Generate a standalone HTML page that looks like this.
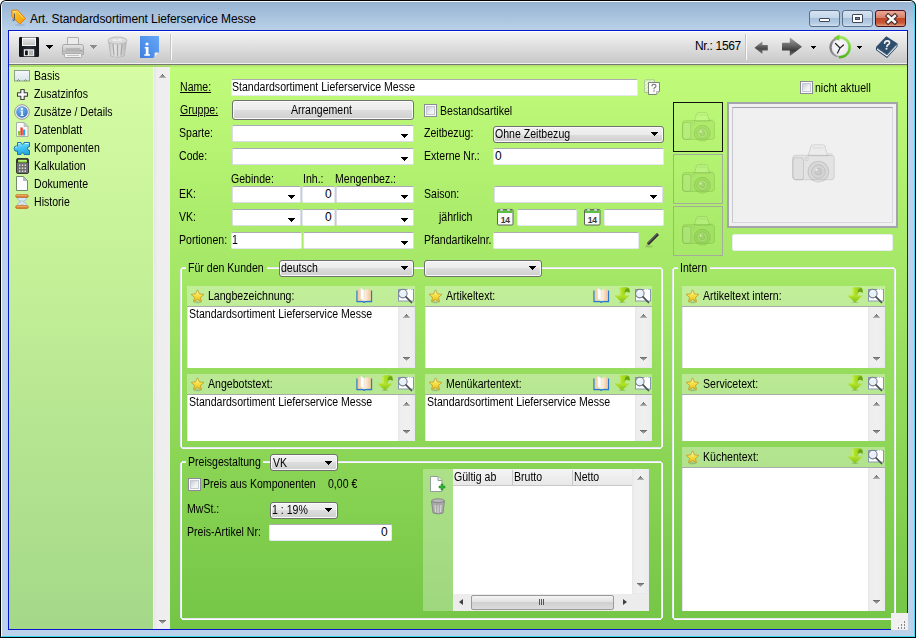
<!DOCTYPE html>
<html><head><meta charset="utf-8">
<style>
*{box-sizing:border-box;margin:0;padding:0}
html,body{width:916px;height:638px;overflow:hidden;background:#fff}
body{position:relative;font-family:"Liberation Sans",sans-serif;font-size:11px;color:#000}
.a{position:absolute}
#win{position:absolute;left:0;top:0;width:916px;height:638px;background:#000;border-radius:6px 6px 0 0}
#frame{position:absolute;left:1px;top:1px;width:914px;height:636px;border-radius:5px 5px 0 0;border-left:1px solid #f8f8f8;background:linear-gradient(#f8f8f8 0,#f8f8f8 1px,#97b3d3 1px,#b8d0e8 28px,#bcd2ea 40px,#bcd2ea 100%);border-right:1px solid #4ad8f0;border-bottom:1px solid #30d8f0}
#client{position:absolute;left:8px;top:30px;width:900px;height:600px;border:1px solid #0818d0;background:#c1fb7a;overflow:hidden}
#toolbar{position:absolute;left:0;top:0;width:898px;height:34px;background:linear-gradient(#fff 0,#fff 1px,#f3f3f3 1px,#c8c8c8 32px,#f0f0f0 32px,#f0f0f0 33px,#767676 33px)}
#nav{position:absolute;left:0;top:34px;width:161px;height:564px;background:linear-gradient(#aade66 0,#aade66 2px,#d6fca4 2px,#c8f39a 160px,#a4d888 100%)}
#navsb{position:absolute;left:144px;top:36px;width:17px;height:562px;background:linear-gradient(90deg,#f4f0f8 0,#f4f0f8 1px,#e6e6e6 1px,#eeeeee 4px,#efefef 100%)}
#main{position:absolute;left:161px;top:34px;width:737px;height:564px;background:linear-gradient(#aede66 0,#c1fb7a 3px,#9be060 276px,#74c546 100%)}
.t{position:absolute;white-space:nowrap;font-size:12px;line-height:13px;transform:scaleX(0.88);transform-origin:0 0;margin-left:-1px}
.tb{position:absolute;background:#fff;border:1px solid #e3e9ef;border-top-color:#abadb3;border-radius:2px}
.cb{position:absolute;background:#fff;border:1px solid #dcdce8;border-top-color:#a8a8b8;border-radius:2px}
.tri{position:absolute;width:7px;height:4px;--c:#000;background:linear-gradient(var(--c),var(--c)) 0 0/7px 1px no-repeat,linear-gradient(var(--c),var(--c)) 1px 1px/5px 1px no-repeat,linear-gradient(var(--c),var(--c)) 2px 2px/3px 1px no-repeat,linear-gradient(var(--c),var(--c)) 3px 3px/1px 1px no-repeat}
.tri5{position:absolute;width:5px;height:3px;--c:#000;background:linear-gradient(var(--c),var(--c)) 0 0/5px 1px no-repeat,linear-gradient(var(--c),var(--c)) 1px 1px/3px 1px no-repeat,linear-gradient(var(--c),var(--c)) 2px 2px/1px 1px no-repeat}
.tup{width:7px;height:4px;background:linear-gradient(#6a6a6a,#6a6a6a) 3px 0/1px 1px no-repeat,linear-gradient(#808080,#808080) 2px 1px/3px 1px no-repeat,linear-gradient(#989898,#989898) 1px 2px/5px 1px no-repeat,linear-gradient(#b0b0b0,#b0b0b0) 0 3px/7px 1px no-repeat}
.tdn{width:7px;height:4px;background:linear-gradient(#707070,#707070) 0 0/7px 1px no-repeat,linear-gradient(#888,#888) 1px 1px/5px 1px no-repeat,linear-gradient(#a0a0a0,#a0a0a0) 2px 2px/3px 1px no-repeat,linear-gradient(#b8b8b8,#b8b8b8) 3px 3px/1px 1px no-repeat}
.gc{position:absolute;border:1px solid #707070;border-radius:3px;background:linear-gradient(#f2f2f2,#ebebeb 50%,#dddddd 50%,#cfcfcf);box-shadow:inset 0 0 0 1px #fafafa}
.grp{position:absolute;border:1px solid #fff;border-radius:3px}
.ph{position:absolute;background:rgba(255,255,255,0.34);border-bottom:1px solid #a8aca8}
.ta{position:absolute;background:#fff;border-left:1px solid #e4e4f0}
.vsb{position:absolute;background:linear-gradient(90deg,#e6e6e6 0,#eeeeee 2px,#f0f0f0 60%,#ececec 100%);border-right:1px solid #e8e8f0;border-bottom:1px solid #e8e8f0}
.chk{position:absolute;width:13px;height:13px;border:1px solid #8c8a98;background:#fafafa}.chk::after{content:'';position:absolute;left:1px;top:1px;width:9px;height:9px;box-sizing:border-box;border:1px solid #c4c8d0;background:linear-gradient(135deg,#c8ccd4,#eef0f2 60%,#f8f8f8)}
.capbtn{border:1px solid #5b6f88;border-radius:3px;background:linear-gradient(#d6e4f2 0,#c4d6ea 45%,#a8c0da 50%,#b4cce4 80%,#cfe0f0 100%)}
</style></head><body>
<div id="win"></div>
<div id="frame"></div>

<div id="client">
  <div id="toolbar"></div>
  <div id="nav"></div>
  <div id="navsb"></div>
  <div id="main"></div>
</div>

<!-- TITLE BAR -->
<svg class="a" style="left:9px;top:9px" width="18" height="18" viewBox="0 0 18 18">
  <defs><linearGradient id="gtag" x1="0" y1="0" x2="1" y2="1"><stop offset="0" stop-color="#ffc830"/><stop offset="1" stop-color="#f0a000"/></linearGradient></defs>
  <ellipse cx="11" cy="16" rx="5" ry="1.2" fill="rgba(60,90,140,0.15)"/>
  <path d="M2.8 1.6 Q2.6 1.2 3.2 1.2 L8.7 1.2 L16.4 9.6 L10.9 15 L2.8 7.6 Z" fill="url(#gtag)" stroke="#e87c0c" stroke-width="1" stroke-linejoin="round"/>
  <path d="M3.8 2.4 L8.4 2.4 L14.8 9.4" fill="none" stroke="#ffe490" stroke-width="0.9"/>
  <circle cx="5.5" cy="4.4" r="1" fill="#fff8e0"/>
  <path d="M5.4 4.2 L5.4 10.6 Q5.2 12 4.3 11.6 Q3.8 11.3 4 10.4" fill="none" stroke="#404850" stroke-width="0.9"/>
</svg>
<div class="t" style="left:30px;top:12px;font-size:12px;line-height:15px;letter-spacing:-0.1px;transform:none;margin-left:0">Art. Standardsortiment Lieferservice Messe</div>
<div class="a capbtn" style="left:809px;top:10px;width:31px;height:17px"><div class="a" style="left:9px;top:7px;width:11px;height:4px;background:#fff;border:1px solid #404858;border-radius:1px"></div></div>
<div class="a capbtn" style="left:842px;top:10px;width:31px;height:17px"><div class="a" style="left:9px;top:3px;width:11px;height:9px;background:#fff;border:1px solid #404858;border-radius:1px"><div class="a" style="left:2px;top:2px;width:5px;height:3px;background:#6c86a8;border:1px solid #404858"></div></div></div>
<div class="a" style="left:875px;top:10px;width:31px;height:17px;border:1px solid #50101a;border-radius:3px;background:linear-gradient(#eaa898 0,#d88068 45%,#c04828 50%,#c85838 80%,#e0a080 100%)">
  <svg class="a" style="left:9px;top:2px" width="13" height="12" viewBox="0 0 13 12"><path d="M3.2 3 L9.8 9 M9.8 3 L3.2 9" stroke="#402828" stroke-width="4.6" stroke-linecap="square"/><path d="M3.2 3 L9.8 9 M9.8 3 L3.2 9" stroke="#f6f6f6" stroke-width="2.6" stroke-linecap="square"/></svg>
</div>

<!-- TOOLBAR -->
<svg class="a" style="left:18px;top:36px" width="22" height="22" viewBox="0 0 22 22">
  <defs><linearGradient id="gfl" x1="0" y1="0" x2="1" y2="0"><stop offset="0" stop-color="#101218"/><stop offset="0.5" stop-color="#2a2e38"/><stop offset="1" stop-color="#14161c"/></linearGradient>
  <linearGradient id="glb" x1="0" y1="0" x2="0" y2="1"><stop offset="0" stop-color="#e4e4e4"/><stop offset="1" stop-color="#c4c4c4"/></linearGradient></defs>
  <rect x="1" y="1" width="20" height="20" rx="1.2" fill="url(#gfl)"/>
  <rect x="4" y="1.5" width="14" height="8.5" fill="#f8f8f8"/>
  <rect x="5" y="3" width="12" height="6" fill="url(#glb)"/>
  <rect x="5.8" y="13.2" width="10.4" height="7" fill="#e8e8e8"/>
  <rect x="7" y="14.5" width="2.8" height="4.8" rx="0.8" fill="#141414"/>
  <rect x="11" y="14.5" width="4" height="4.8" fill="#b4b4b4"/>
</svg>
<div class="tri" style="left:46px;top:45px"></div>
<svg class="a" style="left:61px;top:36px" width="24" height="23" viewBox="0 0 24 23">
  <defs><linearGradient id="gpr" x1="0" y1="0" x2="0" y2="1"><stop offset="0" stop-color="#e8e8e8"/><stop offset="0.35" stop-color="#d4d4d4"/><stop offset="0.7" stop-color="#b8b8b8"/><stop offset="1" stop-color="#d0d0d0"/></linearGradient></defs>
  <rect x="6.5" y="1.5" width="11" height="9" rx="0.5" fill="#ececec" stroke="#b0b0b0"/>
  <path d="M1.5 10.5 Q1.5 8.5 4 8.5 L20 8.5 Q22.5 8.5 22.5 10.5 L22.5 18.5 L1.5 18.5 Z" fill="url(#gpr)" stroke="#a8a8a8"/>
  <rect x="5" y="12" width="14" height="3" fill="#a8a8a8" opacity="0.6"/>
  <rect x="3.5" y="17.5" width="17" height="4" rx="1" fill="#f2f2f2" stroke="#ababab"/>
  <rect x="6" y="19" width="12" height="1" fill="#c0c0c0"/>
  <rect x="19.5" y="14" width="1" height="1" fill="#888"/>
</svg>
<div class="tri" style="left:90px;top:45px;--c:#8c8c8c"></div>
<svg class="a" style="left:106px;top:35px" width="23" height="24" viewBox="0 0 23 24">
  <defs><linearGradient id="gtr" x1="0" y1="0" x2="1" y2="0"><stop offset="0" stop-color="#bcbcbc"/><stop offset="0.3" stop-color="#e6e6e6"/><stop offset="0.7" stop-color="#d8d8d8"/><stop offset="1" stop-color="#b0b0b0"/></linearGradient></defs>
  <path d="M2.5 6 L4.8 21 Q11.5 24 18.2 21 L20.5 6 Z" fill="url(#gtr)" stroke="#b4b4b4" stroke-width="0.8"/>
  <path d="M7 9 L8 20.5 M11.5 9.5 L11.5 21.5 M16 9 L15 20.5" stroke="#a8a8a8" stroke-width="1.3"/>
  <ellipse cx="11.5" cy="5.5" rx="9.5" ry="3.5" fill="#dcdcdc" stroke="#b8b8b8" stroke-width="0.9"/>
  <path d="M5 5 Q8 2.5 11 4.5 Q14 2 18 5 Q14 7.5 11 6 Q8 8 5 5 Z" fill="#f0f0f0" stroke="#c8c8c8" stroke-width="0.5"/>
</svg>
<svg class="a" style="left:140px;top:36px" width="20" height="22" viewBox="0 0 20 22">
  <defs><linearGradient id="ginf" x1="0" y1="1" x2="1" y2="0"><stop offset="0" stop-color="#3c7ee0"/><stop offset="1" stop-color="#68a8f8"/></linearGradient></defs>
  <path d="M0 0 H19 V16.5 L13.5 22 H0 Z" fill="url(#ginf)"/>
  <path d="M19 16.5 Q15 16 14.5 17 Q15 20 13.5 22 Z" fill="#f0f4fa"/>
  <path d="M19 16.5 Q15 16 14.5 17 Q15 20 13.5 22" fill="none" stroke="#90a8c8" stroke-width="0.5"/>
  <circle cx="7" cy="8" r="1.6" fill="#fff"/>
  <path d="M4.8 11 H8.5 V18.2 H10 V19.8 H4.3 V18.2 H5.8 V12.4 H4.8 Z" fill="#fff"/>
</svg>
<div class="a" style="left:170px;top:34px;width:1px;height:26px;background:#c4c4c4;box-shadow:1px 0 0 #fafafa"></div>
<div class="t" style="left:695px;top:39px;font-size:12px;line-height:14px;letter-spacing:-0.3px;transform:none;margin-left:0">Nr.: 1567</div>
<div class="a" style="left:745px;top:34px;width:1px;height:26px;background:#c4c4c4;box-shadow:1px 0 0 #fafafa"></div>
<svg class="a" style="left:753px;top:41px" width="16" height="14" viewBox="0 0 16 14">
  <defs><linearGradient id="ga" x1="0" y1="0" x2="0" y2="1"><stop offset="0" stop-color="#9a9a9a"/><stop offset="0.55" stop-color="#4a4a4a"/><stop offset="1" stop-color="#6a6a6a"/></linearGradient></defs>
  <path d="M1.5 6.8 L8.8 0.8 Q9.4 0.6 9.4 1.4 L9.4 4 L14.4 4 Q14.8 4 14.8 4.5 L14.8 9.2 Q14.8 9.6 14.4 9.6 L9.4 9.6 L9.4 12.2 Q9.4 13 8.8 12.6 Z" fill="url(#ga)"/>
</svg>
<svg class="a" style="left:781px;top:37px" width="22" height="20" viewBox="0 0 22 20">
  <defs><linearGradient id="gb" x1="0" y1="0" x2="0" y2="1"><stop offset="0" stop-color="#a0a0a0"/><stop offset="0.5" stop-color="#5a5a5a"/><stop offset="0.7" stop-color="#3c3c3c"/><stop offset="1" stop-color="#707070"/></linearGradient></defs>
  <path d="M21 9.8 L9.6 1 Q8.8 0.5 8.8 1.5 L8.8 5.8 L1.6 5.8 Q1 5.8 1 6.5 L1 13 Q1 13.6 1.6 13.6 L8.8 13.6 L8.8 18.2 Q8.8 19.2 9.6 18.6 Z" fill="url(#gb)"/>
</svg>
<div class="tri5" style="left:811px;top:46px"></div>
<svg class="a" style="left:828px;top:34px" width="25" height="26" viewBox="0 0 25 26">
  <defs><linearGradient id="gcb" x1="0" y1="0" x2="1" y2="0"><stop offset="0" stop-color="#7a7a7a"/><stop offset="0.5" stop-color="#b8b8b8"/><stop offset="1" stop-color="#e0e0e0"/></linearGradient>
  <radialGradient id="gcf" cx="0.45" cy="0.4" r="0.7"><stop offset="0" stop-color="#ffffff"/><stop offset="1" stop-color="#e4e0ea"/></radialGradient>
  <linearGradient id="gcg" x1="0" y1="0" x2="0" y2="1"><stop offset="0" stop-color="#a0e860"/><stop offset="1" stop-color="#50b818"/></linearGradient></defs>
  <circle cx="12" cy="13.2" r="10.6" fill="url(#gcb)"/>
  <circle cx="12.3" cy="13.4" r="8.6" fill="url(#gcf)"/>
  <path d="M12 14 L7.5 9.5 M12 14 L15.5 11 M12 14 L9.5 19" stroke="#2c2c2c" stroke-width="1.3" stroke-linecap="round"/>
  <path d="M10 3.2 Q15.5 2.5 19.5 7 Q22.8 11.5 21 17 Q18.5 22.8 11 23.4" fill="none" stroke="url(#gcg)" stroke-width="2.6"/>
  <path d="M5.8 3.8 L11.5 0.6 L11.2 6.8 Z" fill="#78d030"/>
</svg>
<div class="tri5" style="left:857px;top:46px"></div>
<svg class="a" style="left:875px;top:35px" width="24" height="24" viewBox="0 0 24 24">
  <path d="M1 12 L11.2 1.2 L22.5 8.5 L12 19.5 Z" fill="#2e4c6c"/>
  <path d="M1 12 L12 19.5 L22.5 8.5 L22.5 11.5 L12 23 L1 15 Z" fill="#1e3a58"/>
  <path d="M2 13.2 L12 20.2 L21.6 10 L21.6 11.6 L12 21.8 L2 14.8 Z" fill="#f6f8fa"/>
  <path d="M9.6 8.2 Q10 5.6 12.6 5.8 Q14.9 6.1 14.4 8.2 Q14 9.3 12.7 9.9 Q11.9 10.4 12 11.4" fill="none" stroke="#f4f4f4" stroke-width="1.7" stroke-linecap="round"/>
  <circle cx="11.5" cy="13.8" r="1" fill="#f4f4f4"/>
</svg>

<!-- NAV -->

<svg class="a" style="left:14px;top:70px" width="17" height="13" viewBox="0 0 17 13">
  <defs><linearGradient id="gn1" x1="0" y1="0" x2="0" y2="1"><stop offset="0" stop-color="#f4f8fc"/><stop offset="1" stop-color="#d8e4ec"/></linearGradient></defs>
  <rect x="0.5" y="0.5" width="15" height="10.5" fill="url(#gn1)" stroke="#8ca088"/>
  <path d="M3 11 L4.5 9.5 L6 11 M10 11 L11.5 9.5 L13 11" stroke="#6a9a60" stroke-width="1" fill="none"/>
</svg>
<div class="t" style="left:35px;top:70px">Basis</div>
<svg class="a" style="left:16px;top:88px" width="13" height="13" viewBox="0 0 13 13">
  <path d="M4.8 1.5 H8.2 V4.8 H11.5 V8.2 H8.2 V11.5 H4.8 V8.2 H1.5 V4.8 H4.8 Z" fill="#f8f8f8" stroke="#404040" stroke-width="1.1" stroke-linejoin="round"/>
  <path d="M8.5 7.5 H10.8 M7.5 8.5 V10.8" stroke="#b8b8b8" stroke-width="0.8"/>
</svg>
<div class="t" style="left:35px;top:88px">Zusatzinfos</div>
<svg class="a" style="left:14px;top:104px" width="16" height="16" viewBox="0 0 16 16">
  <defs><radialGradient id="gi" cx="0.4" cy="0.3" r="0.8"><stop offset="0" stop-color="#7cbcf0"/><stop offset="1" stop-color="#2a6cc0"/></radialGradient></defs>
  <circle cx="8" cy="8" r="7.3" fill="#f4f4f4" stroke="#8c8c8c" stroke-width="0.9"/>
  <circle cx="8" cy="8" r="5.8" fill="url(#gi)"/>
  <circle cx="8" cy="4.9" r="1.1" fill="#fff"/>
  <path d="M6.6 6.8 H8.8 V11 H9.6 V11.9 H6.5 V11 H7.3 V7.6 H6.6 Z" fill="#fff"/>
</svg>
<div class="t" style="left:35px;top:106px">Zusätze / Details</div>
<svg class="a" style="left:16px;top:122px" width="13" height="15" viewBox="0 0 13 15">
  <path d="M0.5 0.5 H8 L12 4.5 V14.5 H0.5 Z" fill="#fbfbfb" stroke="#a8b0a8"/>
  <path d="M8 0.5 L8 4.5 H12 Z" fill="#c8ccd0" stroke="#a8b0a8" stroke-width="0.6"/>
  <rect x="2" y="9" width="2.2" height="4.5" fill="#7ccc30"/>
  <rect x="4.4" y="5.5" width="2.4" height="8" fill="#ec4030"/>
  <rect x="7" y="7.5" width="2.2" height="6" fill="#30a0f0"/>
</svg>
<div class="t" style="left:35px;top:124px">Datenblatt</div>
<svg class="a" style="left:13px;top:141px" width="18" height="15" viewBox="0 0 18 15">
  <defs><linearGradient id="gpz" x1="0" y1="0" x2="0.3" y2="1"><stop offset="0" stop-color="#a8ecff"/><stop offset="0.5" stop-color="#48c8f4"/><stop offset="1" stop-color="#2aa8e0"/></linearGradient></defs>
  <path d="M4.5 1.5 H8 Q8 3.2 9.5 3.2 Q11 3.2 11 1.5 H16.5 V5.5 Q14.5 5.5 14.5 7.5 Q14.5 9.5 16.5 9.5 V13.5 H11 Q11 11.8 9.5 11.8 Q8 11.8 8 13.5 H4.5 V10 Q4 10.2 3 10.2 Q1.2 10.2 1.2 7.6 Q1.2 5 3 5 Q4 5 4.5 5.3 Z" fill="url(#gpz)" stroke="#1a78b0" stroke-width="1"/>
  <path d="M5.5 2.5 H7.2 M12 2.5 H15.5 M2.5 6.5 Q3 5.8 4 6" stroke="#e8fbff" stroke-width="0.9" fill="none"/>
</svg>
<div class="t" style="left:35px;top:142px">Komponenten</div>
<svg class="a" style="left:16px;top:158px" width="13" height="16" viewBox="0 0 13 16">
  <rect x="0.5" y="0.5" width="12" height="15" rx="1.5" fill="#6e6e6e" stroke="#383838"/>
  <rect x="1" y="1" width="11" height="4" fill="#303030"/>
  <rect x="2" y="1.8" width="9" height="2.6" rx="0.6" fill="#98e048"/>
  <rect x="2.5" y="2.2" width="8" height="0.8" fill="#c8f890"/>
  <rect x="3" y="6.5" width="1.4" height="1.4" fill="#e8e8e8"/><rect x="5.8" y="6.5" width="1.4" height="1.4" fill="#e8e8e8"/><rect x="8.6" y="6.5" width="1.4" height="1.4" fill="#e8e8e8"/><rect x="3" y="9.5" width="1.4" height="1.4" fill="#e8e8e8"/><rect x="5.8" y="9.5" width="1.4" height="1.4" fill="#e8e8e8"/><rect x="8.6" y="9.5" width="1.4" height="1.4" fill="#e8e8e8"/><rect x="3" y="12.5" width="1.4" height="1.4" fill="#e8e8e8"/><rect x="5.8" y="12.5" width="1.4" height="1.4" fill="#e8e8e8"/><rect x="8.6" y="12.5" width="1.4" height="1.4" fill="#e8e8e8"/>
</svg>
<div class="t" style="left:35px;top:160px">Kalkulation</div>
<svg class="a" style="left:16px;top:176px" width="13" height="15" viewBox="0 0 13 15">
  <path d="M0.5 0.5 H7.5 L11.5 4.5 V14.5 H0.5 Z" fill="#fdfdfd" stroke="#708c6c"/>
  <path d="M7.5 0.5 V4.5 H11.5 Z" fill="#b4bcc4" stroke="#8a9a90" stroke-width="0.5"/>
</svg>
<div class="t" style="left:35px;top:178px">Dokumente</div>
<svg class="a" style="left:15px;top:194px" width="14" height="15" viewBox="0 0 14 15">
  <defs><linearGradient id="ghg" x1="0" y1="0" x2="0" y2="1"><stop offset="0" stop-color="#f8c888"/><stop offset="1" stop-color="#d06a10"/></linearGradient></defs>
  <path d="M2.2 3 Q2.2 6.5 6.2 7.5 Q2.2 8.5 2.2 12 H11.8 Q11.8 8.5 7.8 7.5 Q11.8 6.5 11.8 3 Z" fill="#d4e8fa" stroke="#90b4d8" stroke-width="0.7"/>
  <path d="M3.5 11.5 Q7 8.5 10.5 11.5 Z" fill="#e8c090"/>
  <path d="M6 6.5 H8 L7 7.5 Z" fill="#e8b880"/>
  <rect x="0.6" y="0.6" width="12.8" height="2.8" rx="1.4" fill="url(#ghg)" stroke="#b85a10" stroke-width="0.6"/>
  <rect x="0.6" y="11.6" width="12.8" height="2.8" rx="1.4" fill="url(#ghg)" stroke="#b85a10" stroke-width="0.6"/>
</svg>
<div class="t" style="left:35px;top:196px">Historie</div>
<!-- nav scrollbar -->
<div class="a tup" style="left:159px;top:74px"></div>
<div class="a tdn" style="left:159px;top:620px"></div>

<!-- FORM -->
<div class="t" style="left:181px;top:81px;text-decoration:underline">Name:</div>
<div class="tb" style="left:231px;top:79px;width:407px;height:17px"></div>
<div class="t" style="left:233px;top:81px">Standardsortiment Lieferservice Messe</div>
<svg class="a" style="left:644px;top:79px" width="17" height="17" viewBox="0 0 17 17">
  <defs><pattern id="hatch" width="2.5" height="2.5" patternUnits="userSpaceOnUse" patternTransform="rotate(45)"><rect width="1.2" height="2.5" fill="#c8e8a8"/><rect x="1.2" width="1.3" height="2.5" fill="#f4fbe8"/></pattern></defs>
  <path d="M0.5 1.5 Q0.5 0.8 1.5 0.8 H10.5 V13.5 H0.5 Z" fill="url(#hatch)" stroke="#a0b890" stroke-width="0.7"/>
  <path d="M4.5 3.5 H15.5 V12.5 L12.5 15.5 H4.5 Z" fill="#fafafa" stroke="#707870" stroke-width="0.9"/>
  <path d="M15.5 12.5 H12.5 V15.5" fill="#d8d8d8" stroke="#909890" stroke-width="0.6"/>
  <path d="M8 7.2 Q8 5.3 10 5.3 Q12 5.3 12 7 Q12 8.2 10.5 8.8 Q10 9.1 10 10.3" fill="none" stroke="#707070" stroke-width="1.1"/>
  <rect x="9.4" y="11.4" width="1.2" height="1.2" fill="#707070"/>
</svg>
<div class="t" style="left:181px;top:104px;text-decoration:underline">Gruppe:</div>
<div class="gc" style="left:232px;top:100px;width:182px;height:20px;border-radius:3px"></div>
<div class="t" style="left:292px;top:104px">Arrangement</div>
<div class="chk" style="left:424px;top:104px"></div>
<div class="t" style="left:441px;top:105px">Bestandsartikel</div>
<div class="chk" style="left:800px;top:81px"></div>
<div class="t" style="left:816px;top:82px">nicht aktuell</div>

<div class="t" style="left:180px;top:127px">Sparte:</div>
<div class="cb" style="left:232px;top:125px;width:182px;height:17px"></div>
<div class="tri" style="left:401px;top:134px"></div>
<div class="t" style="left:425px;top:127px">Zeitbezug:</div>
<div class="gc" style="left:493px;top:126px;width:171px;height:17px"></div>
<div class="t" style="left:496px;top:128px;font-size:12px;line-height:13px">Ohne Zeitbezug</div>
<div class="tri" style="left:651px;top:132px"></div>

<div class="t" style="left:180px;top:150px">Code:</div>
<div class="cb" style="left:232px;top:148px;width:182px;height:17px"></div>
<div class="tri" style="left:401px;top:157px"></div>
<div class="t" style="left:425px;top:150px">Externe Nr.:</div>
<div class="tb" style="left:493px;top:148px;width:171px;height:17px"></div>
<div class="t" style="left:496px;top:150px;transform:none">0</div>

<div class="t" style="left:232px;top:173px">Gebinde:</div>
<div class="t" style="left:304px;top:173px">Inh.:</div>
<div class="t" style="left:336px;top:173px">Mengenbez.:</div>

<div class="t" style="left:180px;top:188px">EK:</div>
<div class="cb" style="left:232px;top:186px;width:69px;height:17px"></div>
<div class="tri" style="left:288px;top:195px"></div>
<div class="tb" style="left:302px;top:186px;width:33px;height:17px"></div>
<div class="t" style="left:326px;top:188px;transform:none">0</div>
<div class="cb" style="left:336px;top:186px;width:78px;height:17px"></div>
<div class="tri" style="left:401px;top:195px"></div>
<div class="t" style="left:425px;top:188px">Saison:</div>
<div class="cb" style="left:494px;top:186px;width:169px;height:17px"></div>
<div class="tri" style="left:650px;top:195px"></div>

<div class="t" style="left:180px;top:211px">VK:</div>
<div class="cb" style="left:232px;top:209px;width:69px;height:17px"></div>
<div class="tri" style="left:288px;top:218px"></div>
<div class="tb" style="left:302px;top:209px;width:33px;height:17px"></div>
<div class="t" style="left:326px;top:211px;transform:none">0</div>
<div class="cb" style="left:336px;top:209px;width:78px;height:17px"></div>
<div class="tri" style="left:401px;top:218px"></div>
<div class="t" style="left:440px;top:211px">jährlich</div>
<svg class="a cal" style="left:497px;top:208px" width="17" height="18" viewBox="0 0 17 18">
  <rect x="0.5" y="1.5" width="15.5" height="15.5" rx="1" fill="#fafafa" stroke="#5a6458"/>
  <rect x="1" y="2" width="14.5" height="3" fill="#5cc040"/>
  <rect x="3" y="1" width="3" height="2" fill="#f0f0f0" stroke="#7a8a78" stroke-width="0.5"/>
  <rect x="10" y="1" width="3" height="2" fill="#f0f0f0" stroke="#7a8a78" stroke-width="0.5"/>
  <text x="8.3" y="14.5" text-anchor="middle" font-size="8.5" font-weight="bold" font-family="Liberation Sans" fill="#3a3a3a" letter-spacing="-0.3">14</text>
</svg>
<div class="tb" style="left:517px;top:209px;width:60px;height:17px"></div>
<svg class="a cal" style="left:584px;top:208px" width="17" height="18" viewBox="0 0 17 18">
  <rect x="0.5" y="1.5" width="15.5" height="15.5" rx="1" fill="#fafafa" stroke="#5a6458"/>
  <rect x="1" y="2" width="14.5" height="3" fill="#5cc040"/>
  <rect x="3" y="1" width="3" height="2" fill="#f0f0f0" stroke="#7a8a78" stroke-width="0.5"/>
  <rect x="10" y="1" width="3" height="2" fill="#f0f0f0" stroke="#7a8a78" stroke-width="0.5"/>
  <text x="8.3" y="14.5" text-anchor="middle" font-size="8.5" font-weight="bold" font-family="Liberation Sans" fill="#3a3a3a" letter-spacing="-0.3">14</text>
</svg>
<div class="tb" style="left:604px;top:209px;width:60px;height:17px"></div>

<div class="t" style="left:180px;top:234px">Portionen:</div>
<div class="tb" style="left:231px;top:232px;width:71px;height:17px"></div>
<div class="t" style="left:233px;top:234px">1</div>
<div class="cb" style="left:303px;top:232px;width:111px;height:17px"></div>
<div class="tri" style="left:401px;top:241px"></div>
<div class="t" style="left:425px;top:234px">Pfandartikelnr.</div>
<div class="tb" style="left:493px;top:232px;width:146px;height:17px"></div>
<svg class="a" style="left:644px;top:231px" width="17" height="17" viewBox="0 0 17 17">
  <ellipse cx="5" cy="15.5" rx="4" ry="1" fill="rgba(40,80,20,0.18)"/>
  <path d="M2.5 15 L3.5 11.5 L13 2 L15 4 L5.5 13.5 Z" fill="#2a2a2a"/>
  <path d="M3.5 11.5 L13 2 L14 3 L4.5 12.5 Z" fill="#606060"/>
  <path d="M2.5 15 L3.2 12.6 L4.9 14.2 Z" fill="#c8b088"/>
</svg>

<!-- photos -->
<div class="a" style="left:673px;top:102px;width:50px;height:50px;border:1px solid #101010"></div>
<div class="a" style="left:673px;top:154px;width:50px;height:50px;border:1px solid #a4ac9c"></div>
<div class="a" style="left:673px;top:206px;width:50px;height:50px;border:1px solid #a4ac9c"></div>
<svg class="a" style="left:682px;top:112px;filter:blur(0.3px)" width="33" height="30.0" viewBox="0 0 44 40">
<path d="M19.5 2 Q20 0.8 21.5 0.8 H31.5 Q33 0.8 33.5 2 L36.5 12 H16.5 Z" fill="rgba(255,255,255,0.10)" stroke="rgba(60,110,20,0.20)" stroke-width="1.1"/>
<path d="M21 4 H32" stroke="rgba(60,110,20,0.20)" stroke-width="0.8"/>
<rect x="0.8" y="11.5" width="42.4" height="25" rx="3.5" fill="rgba(70,120,20,0.08)" stroke="rgba(60,110,20,0.20)" stroke-width="1.1"/>
<rect x="0.8" y="14" width="11" height="22.5" rx="3" fill="rgba(255,255,255,0.10)" stroke="rgba(60,110,20,0.20)" stroke-width="1.1"/>
<rect x="37" y="9.5" width="4" height="2" fill="rgba(255,255,255,0.10)" stroke="rgba(60,110,20,0.20)" stroke-width="0.6"/>
<circle cx="27" cy="28.3" r="10.6" fill="rgba(70,120,20,0.08)" stroke="rgba(60,110,20,0.20)" stroke-width="1.1"/>
<circle cx="27" cy="28.3" r="7" fill="rgba(255,255,255,0.10)" stroke="rgba(60,110,20,0.20)" stroke-width="1"/>
<circle cx="27" cy="28.3" r="3.5" fill="rgba(70,120,20,0.08)" stroke="rgba(60,110,20,0.20)" stroke-width="0.7"/>
<circle cx="25" cy="26.3" r="1.2" fill="rgba(255,255,255,0.7)"/>
<rect x="13.5" y="14" width="3" height="3" fill="rgba(255,255,255,0.10)" stroke="rgba(60,110,20,0.20)" stroke-width="0.6"/>
</svg>
<svg class="a" style="left:682px;top:164px;filter:blur(0.3px)" width="33" height="30.0" viewBox="0 0 44 40">
<path d="M19.5 2 Q20 0.8 21.5 0.8 H31.5 Q33 0.8 33.5 2 L36.5 12 H16.5 Z" fill="rgba(255,255,255,0.10)" stroke="rgba(60,110,20,0.20)" stroke-width="1.1"/>
<path d="M21 4 H32" stroke="rgba(60,110,20,0.20)" stroke-width="0.8"/>
<rect x="0.8" y="11.5" width="42.4" height="25" rx="3.5" fill="rgba(70,120,20,0.08)" stroke="rgba(60,110,20,0.20)" stroke-width="1.1"/>
<rect x="0.8" y="14" width="11" height="22.5" rx="3" fill="rgba(255,255,255,0.10)" stroke="rgba(60,110,20,0.20)" stroke-width="1.1"/>
<rect x="37" y="9.5" width="4" height="2" fill="rgba(255,255,255,0.10)" stroke="rgba(60,110,20,0.20)" stroke-width="0.6"/>
<circle cx="27" cy="28.3" r="10.6" fill="rgba(70,120,20,0.08)" stroke="rgba(60,110,20,0.20)" stroke-width="1.1"/>
<circle cx="27" cy="28.3" r="7" fill="rgba(255,255,255,0.10)" stroke="rgba(60,110,20,0.20)" stroke-width="1"/>
<circle cx="27" cy="28.3" r="3.5" fill="rgba(70,120,20,0.08)" stroke="rgba(60,110,20,0.20)" stroke-width="0.7"/>
<circle cx="25" cy="26.3" r="1.2" fill="rgba(255,255,255,0.7)"/>
<rect x="13.5" y="14" width="3" height="3" fill="rgba(255,255,255,0.10)" stroke="rgba(60,110,20,0.20)" stroke-width="0.6"/>
</svg>
<svg class="a" style="left:682px;top:216px;filter:blur(0.3px)" width="33" height="30.0" viewBox="0 0 44 40">
<path d="M19.5 2 Q20 0.8 21.5 0.8 H31.5 Q33 0.8 33.5 2 L36.5 12 H16.5 Z" fill="rgba(255,255,255,0.10)" stroke="rgba(60,110,20,0.20)" stroke-width="1.1"/>
<path d="M21 4 H32" stroke="rgba(60,110,20,0.20)" stroke-width="0.8"/>
<rect x="0.8" y="11.5" width="42.4" height="25" rx="3.5" fill="rgba(70,120,20,0.08)" stroke="rgba(60,110,20,0.20)" stroke-width="1.1"/>
<rect x="0.8" y="14" width="11" height="22.5" rx="3" fill="rgba(255,255,255,0.10)" stroke="rgba(60,110,20,0.20)" stroke-width="1.1"/>
<rect x="37" y="9.5" width="4" height="2" fill="rgba(255,255,255,0.10)" stroke="rgba(60,110,20,0.20)" stroke-width="0.6"/>
<circle cx="27" cy="28.3" r="10.6" fill="rgba(70,120,20,0.08)" stroke="rgba(60,110,20,0.20)" stroke-width="1.1"/>
<circle cx="27" cy="28.3" r="7" fill="rgba(255,255,255,0.10)" stroke="rgba(60,110,20,0.20)" stroke-width="1"/>
<circle cx="27" cy="28.3" r="3.5" fill="rgba(70,120,20,0.08)" stroke="rgba(60,110,20,0.20)" stroke-width="0.7"/>
<circle cx="25" cy="26.3" r="1.2" fill="rgba(255,255,255,0.7)"/>
<rect x="13.5" y="14" width="3" height="3" fill="rgba(255,255,255,0.10)" stroke="rgba(60,110,20,0.20)" stroke-width="0.6"/>
</svg>
<div class="a" style="left:727px;top:102px;width:171px;height:126px;border:2px solid #a4a4ac;background:#f0f0f0"><div class="a" style="left:3px;top:3px;width:161px;height:116px;border:1px solid #d8d8e0;border-top-color:#a0a0a8;border-left-color:#c8c8d0"></div></div>
<svg class="a" style="left:792px;top:144px;filter:blur(0.3px)" width="43" height="39.1" viewBox="0 0 44 40">
<path d="M19.5 2 Q20 0.8 21.5 0.8 H31.5 Q33 0.8 33.5 2 L36.5 12 H16.5 Z" fill="rgba(0,0,0,0.02)" stroke="rgba(0,0,0,0.11)" stroke-width="1.1"/>
<path d="M21 4 H32" stroke="rgba(0,0,0,0.11)" stroke-width="0.8"/>
<rect x="0.8" y="11.5" width="42.4" height="25" rx="3.5" fill="rgba(0,0,0,0.05)" stroke="rgba(0,0,0,0.11)" stroke-width="1.1"/>
<rect x="0.8" y="14" width="11" height="22.5" rx="3" fill="rgba(0,0,0,0.02)" stroke="rgba(0,0,0,0.11)" stroke-width="1.1"/>
<rect x="37" y="9.5" width="4" height="2" fill="rgba(0,0,0,0.02)" stroke="rgba(0,0,0,0.11)" stroke-width="0.6"/>
<circle cx="27" cy="28.3" r="10.6" fill="rgba(0,0,0,0.05)" stroke="rgba(0,0,0,0.11)" stroke-width="1.1"/>
<circle cx="27" cy="28.3" r="7" fill="rgba(0,0,0,0.02)" stroke="rgba(0,0,0,0.11)" stroke-width="1"/>
<circle cx="27" cy="28.3" r="3.5" fill="rgba(0,0,0,0.05)" stroke="rgba(0,0,0,0.11)" stroke-width="0.7"/>
<circle cx="25" cy="26.3" r="1.2" fill="rgba(255,255,255,0.7)"/>
<rect x="13.5" y="14" width="3" height="3" fill="rgba(0,0,0,0.02)" stroke="rgba(0,0,0,0.11)" stroke-width="0.6"/>
</svg>
<div class="tb" style="left:732px;top:234px;width:161px;height:17px;border-color:#e8eef0"></div>

<!-- GROUPS -->
<div class="a" style="left:180px;top:269px;width:1px;height:178px;background:#e4e6f4"></div>
<div class="a" style="left:181px;top:269px;width:1px;height:178px;background:#fbfbff"></div>
<div class="a" style="left:661px;top:269px;width:1px;height:178px;background:#e4e6f4"></div>
<div class="a" style="left:662px;top:269px;width:1px;height:178px;background:#fbfbff"></div>
<div class="a" style="left:182px;top:447px;width:479px;height:1px;background:#e4e6f4"></div>
<div class="a" style="left:182px;top:448px;width:479px;height:1px;background:#fbfbff"></div>
<div class="a" style="left:181px;top:268px;width:1px;height:1px;background:#fbfbff"></div>
<div class="a" style="left:661px;top:268px;width:1px;height:1px;background:#fbfbff"></div>
<div class="a" style="left:181px;top:447px;width:1px;height:1px;background:#fbfbff"></div>
<div class="a" style="left:661px;top:447px;width:1px;height:1px;background:#fbfbff"></div>
<div class="a" style="left:182px;top:267px;width:4px;height:1px;background:#e4e6f4"></div>
<div class="a" style="left:182px;top:268px;width:4px;height:1px;background:#fbfbff"></div>
<div class="a" style="left:267px;top:267px;width:12px;height:1px;background:#e4e6f4"></div>
<div class="a" style="left:267px;top:268px;width:12px;height:1px;background:#fbfbff"></div>
<div class="a" style="left:414px;top:267px;width:10px;height:1px;background:#e4e6f4"></div>
<div class="a" style="left:414px;top:268px;width:10px;height:1px;background:#fbfbff"></div>
<div class="a" style="left:541px;top:267px;width:120px;height:1px;background:#e4e6f4"></div>
<div class="a" style="left:541px;top:268px;width:120px;height:1px;background:#fbfbff"></div>
<div class="t" style="left:189px;top:262px">Für den Kunden</div>
<div class="gc" style="left:279px;top:260px;width:135px;height:17px"></div>
<div class="t" style="left:282px;top:262px;font-size:12px;line-height:13px">deutsch</div>
<div class="tri" style="left:401px;top:266px"></div>
<div class="gc" style="left:424px;top:260px;width:118px;height:17px"></div>
<div class="tri" style="left:529px;top:266px"></div>
<div class="ph" style="left:187px;top:286px;width:228px;height:21px"></div>
<svg class="a" style="left:190px;top:289px" width="15" height="15" viewBox="0 0 15 15"><defs><linearGradient id="gs191_289" x1="0" y1="0" x2="0" y2="1"><stop offset="0" stop-color="#fffbd0"/><stop offset="0.45" stop-color="#f8e448"/><stop offset="1" stop-color="#e4b818"/></linearGradient></defs><ellipse cx="7.5" cy="13.3" rx="3.5" ry="1" fill="rgba(60,90,40,0.25)"/><path d="M7.5 0.8 L9.4 4.9 L13.9 5.4 L10.5 8.4 L11.5 12.8 L7.5 10.5 L3.5 12.8 L4.5 8.4 L1.1 5.4 L5.6 4.9 Z" fill="url(#gs191_289)" stroke="#c09a28" stroke-width="0.8" stroke-linejoin="round"/></svg>
<div class="t" style="left:209px;top:290px">Langbezeichnung:</div>
<svg class="a" style="left:397px;top:288px" width="17" height="16" viewBox="0 0 17 16"><rect x="1.5" y="1.5" width="15" height="11.5" fill="#fff" stroke="#8898b0"/><path d="M10 1.5 H16" stroke="#c0cad8" stroke-width="1"/><rect x="11" y="1" width="1" height="1" fill="#fff"/><rect x="13" y="1" width="1" height="1" fill="#fff"/><circle cx="5.8" cy="5.6" r="4.3" fill="#e8f0fa" stroke="#7a8088" stroke-width="1.1"/><path d="M4 4 Q5 3 6.5 3.2" stroke="#fff" stroke-width="1" fill="none"/><path d="M9 8.8 L14.5 14.5" stroke="#4a5058" stroke-width="1.7" stroke-linecap="round"/></svg><svg class="a" style="left:356px;top:287px" width="17" height="16" viewBox="0 0 17 16"><defs><linearGradient id="gbk356_287" x1="0" y1="0" x2="1" y2="0"><stop offset="0" stop-color="#f4c898"/><stop offset="0.45" stop-color="#fcecd8"/><stop offset="0.55" stop-color="#fcf0e4"/><stop offset="1" stop-color="#f2c494"/></linearGradient></defs><path d="M1 3.5 V14.5 H7 L8.2 15.5 L9.4 14.5 H15.5 V3.5" fill="none" stroke="#2c78d0" stroke-width="1.3"/><path d="M1.8 2.5 Q5 2 8.2 3.2 Q11.4 2 14.7 2.5 V13.8 Q11.4 13.2 8.2 14 Q5 13.2 1.8 13.8 Z" fill="url(#gbk356_287)"/><path d="M4.5 0.5 L8.2 3.2 V14 L4.5 11.5 Z" fill="#fdfdfb" stroke="#d8d0c0" stroke-width="0.5"/></svg><div class="ta" style="left:187px;top:307px;width:228px;height:61px"></div>
<div class="vsb" style="left:398px;top:307px;width:17px;height:61px"></div>
<div class="a tup" style="left:403px;top:314px"></div>
<div class="a tdn" style="left:403px;top:357px"></div>
<div class="t" style="left:190px;top:308px">Standardsortiment Lieferservice Messe</div>
<div class="ph" style="left:425px;top:286px;width:227px;height:21px"></div>
<svg class="a" style="left:428px;top:289px" width="15" height="15" viewBox="0 0 15 15"><defs><linearGradient id="gs429_289" x1="0" y1="0" x2="0" y2="1"><stop offset="0" stop-color="#fffbd0"/><stop offset="0.45" stop-color="#f8e448"/><stop offset="1" stop-color="#e4b818"/></linearGradient></defs><ellipse cx="7.5" cy="13.3" rx="3.5" ry="1" fill="rgba(60,90,40,0.25)"/><path d="M7.5 0.8 L9.4 4.9 L13.9 5.4 L10.5 8.4 L11.5 12.8 L7.5 10.5 L3.5 12.8 L4.5 8.4 L1.1 5.4 L5.6 4.9 Z" fill="url(#gs429_289)" stroke="#c09a28" stroke-width="0.8" stroke-linejoin="round"/></svg>
<div class="t" style="left:447px;top:290px">Artikeltext:</div>
<svg class="a" style="left:634px;top:288px" width="17" height="16" viewBox="0 0 17 16"><rect x="1.5" y="1.5" width="15" height="11.5" fill="#fff" stroke="#8898b0"/><path d="M10 1.5 H16" stroke="#c0cad8" stroke-width="1"/><rect x="11" y="1" width="1" height="1" fill="#fff"/><rect x="13" y="1" width="1" height="1" fill="#fff"/><circle cx="5.8" cy="5.6" r="4.3" fill="#e8f0fa" stroke="#7a8088" stroke-width="1.1"/><path d="M4 4 Q5 3 6.5 3.2" stroke="#fff" stroke-width="1" fill="none"/><path d="M9 8.8 L14.5 14.5" stroke="#4a5058" stroke-width="1.7" stroke-linecap="round"/></svg><svg class="a" style="left:614px;top:286px" width="17" height="17" viewBox="0 0 17 17"><defs><linearGradient id="gar614_286" x1="0" y1="0" x2="1" y2="0"><stop offset="0" stop-color="#b8e838"/><stop offset="0.55" stop-color="#a0d818"/><stop offset="1" stop-color="#70b010"/></linearGradient><linearGradient id="gah614_286" x1="0" y1="0" x2="0" y2="1"><stop offset="0" stop-color="#b4e430"/><stop offset="1" stop-color="#80c010"/></linearGradient></defs><ellipse cx="8" cy="16.3" rx="3.5" ry="0.7" fill="rgba(40,80,20,0.2)"/><path d="M5.2 10 V3 Q5.2 1.2 7.5 1.2 H12 Q15.6 1.2 15.6 4 V7 Q14 5.6 12.5 6 Q10.8 6.5 10.8 10 Z" fill="url(#gar614_286)"/><path d="M10.8 4.5 Q11.5 2.3 13.5 2.5 Q15.5 3 15.6 6.5 Q14 5.3 12.5 5.7 Q11.2 6 10.8 7 Z" fill="#5e9818" opacity="0.75"/><path d="M0.4 9.6 H15.6 L8 16.4 Z" fill="url(#gah614_286)"/><path d="M6 3 V9.5" stroke="#d8f488" stroke-width="0.9" opacity="0.8"/></svg><svg class="a" style="left:593px;top:287px" width="17" height="16" viewBox="0 0 17 16"><defs><linearGradient id="gbk593_287" x1="0" y1="0" x2="1" y2="0"><stop offset="0" stop-color="#f4c898"/><stop offset="0.45" stop-color="#fcecd8"/><stop offset="0.55" stop-color="#fcf0e4"/><stop offset="1" stop-color="#f2c494"/></linearGradient></defs><path d="M1 3.5 V14.5 H7 L8.2 15.5 L9.4 14.5 H15.5 V3.5" fill="none" stroke="#2c78d0" stroke-width="1.3"/><path d="M1.8 2.5 Q5 2 8.2 3.2 Q11.4 2 14.7 2.5 V13.8 Q11.4 13.2 8.2 14 Q5 13.2 1.8 13.8 Z" fill="url(#gbk593_287)"/><path d="M4.5 0.5 L8.2 3.2 V14 L4.5 11.5 Z" fill="#fdfdfb" stroke="#d8d0c0" stroke-width="0.5"/></svg><div class="ta" style="left:425px;top:307px;width:227px;height:61px"></div>
<div class="vsb" style="left:635px;top:307px;width:17px;height:61px"></div>
<div class="a tup" style="left:640px;top:314px"></div>
<div class="a tdn" style="left:640px;top:357px"></div>
<div class="ph" style="left:187px;top:374px;width:228px;height:21px"></div>
<svg class="a" style="left:190px;top:377px" width="15" height="15" viewBox="0 0 15 15"><defs><linearGradient id="gs191_377" x1="0" y1="0" x2="0" y2="1"><stop offset="0" stop-color="#fffbd0"/><stop offset="0.45" stop-color="#f8e448"/><stop offset="1" stop-color="#e4b818"/></linearGradient></defs><ellipse cx="7.5" cy="13.3" rx="3.5" ry="1" fill="rgba(60,90,40,0.25)"/><path d="M7.5 0.8 L9.4 4.9 L13.9 5.4 L10.5 8.4 L11.5 12.8 L7.5 10.5 L3.5 12.8 L4.5 8.4 L1.1 5.4 L5.6 4.9 Z" fill="url(#gs191_377)" stroke="#c09a28" stroke-width="0.8" stroke-linejoin="round"/></svg>
<div class="t" style="left:209px;top:378px">Angebotstext:</div>
<svg class="a" style="left:397px;top:376px" width="17" height="16" viewBox="0 0 17 16"><rect x="1.5" y="1.5" width="15" height="11.5" fill="#fff" stroke="#8898b0"/><path d="M10 1.5 H16" stroke="#c0cad8" stroke-width="1"/><rect x="11" y="1" width="1" height="1" fill="#fff"/><rect x="13" y="1" width="1" height="1" fill="#fff"/><circle cx="5.8" cy="5.6" r="4.3" fill="#e8f0fa" stroke="#7a8088" stroke-width="1.1"/><path d="M4 4 Q5 3 6.5 3.2" stroke="#fff" stroke-width="1" fill="none"/><path d="M9 8.8 L14.5 14.5" stroke="#4a5058" stroke-width="1.7" stroke-linecap="round"/></svg><svg class="a" style="left:377px;top:374px" width="17" height="17" viewBox="0 0 17 17"><defs><linearGradient id="gar377_374" x1="0" y1="0" x2="1" y2="0"><stop offset="0" stop-color="#b8e838"/><stop offset="0.55" stop-color="#a0d818"/><stop offset="1" stop-color="#70b010"/></linearGradient><linearGradient id="gah377_374" x1="0" y1="0" x2="0" y2="1"><stop offset="0" stop-color="#b4e430"/><stop offset="1" stop-color="#80c010"/></linearGradient></defs><ellipse cx="8" cy="16.3" rx="3.5" ry="0.7" fill="rgba(40,80,20,0.2)"/><path d="M5.2 10 V3 Q5.2 1.2 7.5 1.2 H12 Q15.6 1.2 15.6 4 V7 Q14 5.6 12.5 6 Q10.8 6.5 10.8 10 Z" fill="url(#gar377_374)"/><path d="M10.8 4.5 Q11.5 2.3 13.5 2.5 Q15.5 3 15.6 6.5 Q14 5.3 12.5 5.7 Q11.2 6 10.8 7 Z" fill="#5e9818" opacity="0.75"/><path d="M0.4 9.6 H15.6 L8 16.4 Z" fill="url(#gah377_374)"/><path d="M6 3 V9.5" stroke="#d8f488" stroke-width="0.9" opacity="0.8"/></svg><svg class="a" style="left:356px;top:375px" width="17" height="16" viewBox="0 0 17 16"><defs><linearGradient id="gbk356_375" x1="0" y1="0" x2="1" y2="0"><stop offset="0" stop-color="#f4c898"/><stop offset="0.45" stop-color="#fcecd8"/><stop offset="0.55" stop-color="#fcf0e4"/><stop offset="1" stop-color="#f2c494"/></linearGradient></defs><path d="M1 3.5 V14.5 H7 L8.2 15.5 L9.4 14.5 H15.5 V3.5" fill="none" stroke="#2c78d0" stroke-width="1.3"/><path d="M1.8 2.5 Q5 2 8.2 3.2 Q11.4 2 14.7 2.5 V13.8 Q11.4 13.2 8.2 14 Q5 13.2 1.8 13.8 Z" fill="url(#gbk356_375)"/><path d="M4.5 0.5 L8.2 3.2 V14 L4.5 11.5 Z" fill="#fdfdfb" stroke="#d8d0c0" stroke-width="0.5"/></svg><div class="ta" style="left:187px;top:395px;width:228px;height:46px"></div>
<div class="vsb" style="left:398px;top:395px;width:17px;height:46px"></div>
<div class="a tup" style="left:403px;top:402px"></div>
<div class="a tdn" style="left:403px;top:430px"></div>
<div class="t" style="left:190px;top:396px">Standardsortiment Lieferservice Messe</div>
<div class="ph" style="left:425px;top:374px;width:227px;height:21px"></div>
<svg class="a" style="left:428px;top:377px" width="15" height="15" viewBox="0 0 15 15"><defs><linearGradient id="gs429_377" x1="0" y1="0" x2="0" y2="1"><stop offset="0" stop-color="#fffbd0"/><stop offset="0.45" stop-color="#f8e448"/><stop offset="1" stop-color="#e4b818"/></linearGradient></defs><ellipse cx="7.5" cy="13.3" rx="3.5" ry="1" fill="rgba(60,90,40,0.25)"/><path d="M7.5 0.8 L9.4 4.9 L13.9 5.4 L10.5 8.4 L11.5 12.8 L7.5 10.5 L3.5 12.8 L4.5 8.4 L1.1 5.4 L5.6 4.9 Z" fill="url(#gs429_377)" stroke="#c09a28" stroke-width="0.8" stroke-linejoin="round"/></svg>
<div class="t" style="left:447px;top:378px">Menükartentext:</div>
<svg class="a" style="left:634px;top:376px" width="17" height="16" viewBox="0 0 17 16"><rect x="1.5" y="1.5" width="15" height="11.5" fill="#fff" stroke="#8898b0"/><path d="M10 1.5 H16" stroke="#c0cad8" stroke-width="1"/><rect x="11" y="1" width="1" height="1" fill="#fff"/><rect x="13" y="1" width="1" height="1" fill="#fff"/><circle cx="5.8" cy="5.6" r="4.3" fill="#e8f0fa" stroke="#7a8088" stroke-width="1.1"/><path d="M4 4 Q5 3 6.5 3.2" stroke="#fff" stroke-width="1" fill="none"/><path d="M9 8.8 L14.5 14.5" stroke="#4a5058" stroke-width="1.7" stroke-linecap="round"/></svg><svg class="a" style="left:614px;top:374px" width="17" height="17" viewBox="0 0 17 17"><defs><linearGradient id="gar614_374" x1="0" y1="0" x2="1" y2="0"><stop offset="0" stop-color="#b8e838"/><stop offset="0.55" stop-color="#a0d818"/><stop offset="1" stop-color="#70b010"/></linearGradient><linearGradient id="gah614_374" x1="0" y1="0" x2="0" y2="1"><stop offset="0" stop-color="#b4e430"/><stop offset="1" stop-color="#80c010"/></linearGradient></defs><ellipse cx="8" cy="16.3" rx="3.5" ry="0.7" fill="rgba(40,80,20,0.2)"/><path d="M5.2 10 V3 Q5.2 1.2 7.5 1.2 H12 Q15.6 1.2 15.6 4 V7 Q14 5.6 12.5 6 Q10.8 6.5 10.8 10 Z" fill="url(#gar614_374)"/><path d="M10.8 4.5 Q11.5 2.3 13.5 2.5 Q15.5 3 15.6 6.5 Q14 5.3 12.5 5.7 Q11.2 6 10.8 7 Z" fill="#5e9818" opacity="0.75"/><path d="M0.4 9.6 H15.6 L8 16.4 Z" fill="url(#gah614_374)"/><path d="M6 3 V9.5" stroke="#d8f488" stroke-width="0.9" opacity="0.8"/></svg><svg class="a" style="left:593px;top:375px" width="17" height="16" viewBox="0 0 17 16"><defs><linearGradient id="gbk593_375" x1="0" y1="0" x2="1" y2="0"><stop offset="0" stop-color="#f4c898"/><stop offset="0.45" stop-color="#fcecd8"/><stop offset="0.55" stop-color="#fcf0e4"/><stop offset="1" stop-color="#f2c494"/></linearGradient></defs><path d="M1 3.5 V14.5 H7 L8.2 15.5 L9.4 14.5 H15.5 V3.5" fill="none" stroke="#2c78d0" stroke-width="1.3"/><path d="M1.8 2.5 Q5 2 8.2 3.2 Q11.4 2 14.7 2.5 V13.8 Q11.4 13.2 8.2 14 Q5 13.2 1.8 13.8 Z" fill="url(#gbk593_375)"/><path d="M4.5 0.5 L8.2 3.2 V14 L4.5 11.5 Z" fill="#fdfdfb" stroke="#d8d0c0" stroke-width="0.5"/></svg><div class="ta" style="left:425px;top:395px;width:227px;height:46px"></div>
<div class="vsb" style="left:635px;top:395px;width:17px;height:46px"></div>
<div class="a tup" style="left:640px;top:402px"></div>
<div class="a tdn" style="left:640px;top:430px"></div>
<div class="t" style="left:428px;top:396px">Standardsortiment Lieferservice Messe</div>
<div class="a" style="left:672px;top:269px;width:1px;height:349px;background:#e4e6f4"></div>
<div class="a" style="left:673px;top:269px;width:1px;height:349px;background:#fbfbff"></div>
<div class="a" style="left:894px;top:269px;width:1px;height:349px;background:#e4e6f4"></div>
<div class="a" style="left:895px;top:269px;width:1px;height:349px;background:#fbfbff"></div>
<div class="a" style="left:674px;top:618px;width:220px;height:1px;background:#e4e6f4"></div>
<div class="a" style="left:674px;top:619px;width:220px;height:1px;background:#fbfbff"></div>
<div class="a" style="left:673px;top:268px;width:1px;height:1px;background:#fbfbff"></div>
<div class="a" style="left:894px;top:268px;width:1px;height:1px;background:#fbfbff"></div>
<div class="a" style="left:673px;top:618px;width:1px;height:1px;background:#fbfbff"></div>
<div class="a" style="left:894px;top:618px;width:1px;height:1px;background:#fbfbff"></div>
<div class="a" style="left:674px;top:267px;width:4px;height:1px;background:#e4e6f4"></div>
<div class="a" style="left:674px;top:268px;width:4px;height:1px;background:#fbfbff"></div>
<div class="a" style="left:710px;top:267px;width:184px;height:1px;background:#e4e6f4"></div>
<div class="a" style="left:710px;top:268px;width:184px;height:1px;background:#fbfbff"></div>
<div class="t" style="left:681px;top:262px">Intern</div>
<div class="ph" style="left:682px;top:286px;width:203px;height:21px"></div>
<svg class="a" style="left:685px;top:289px" width="15" height="15" viewBox="0 0 15 15"><defs><linearGradient id="gs686_289" x1="0" y1="0" x2="0" y2="1"><stop offset="0" stop-color="#fffbd0"/><stop offset="0.45" stop-color="#f8e448"/><stop offset="1" stop-color="#e4b818"/></linearGradient></defs><ellipse cx="7.5" cy="13.3" rx="3.5" ry="1" fill="rgba(60,90,40,0.25)"/><path d="M7.5 0.8 L9.4 4.9 L13.9 5.4 L10.5 8.4 L11.5 12.8 L7.5 10.5 L3.5 12.8 L4.5 8.4 L1.1 5.4 L5.6 4.9 Z" fill="url(#gs686_289)" stroke="#c09a28" stroke-width="0.8" stroke-linejoin="round"/></svg>
<div class="t" style="left:704px;top:290px">Artikeltext intern:</div>
<svg class="a" style="left:867px;top:288px" width="17" height="16" viewBox="0 0 17 16"><rect x="1.5" y="1.5" width="15" height="11.5" fill="#fff" stroke="#8898b0"/><path d="M10 1.5 H16" stroke="#c0cad8" stroke-width="1"/><rect x="11" y="1" width="1" height="1" fill="#fff"/><rect x="13" y="1" width="1" height="1" fill="#fff"/><circle cx="5.8" cy="5.6" r="4.3" fill="#e8f0fa" stroke="#7a8088" stroke-width="1.1"/><path d="M4 4 Q5 3 6.5 3.2" stroke="#fff" stroke-width="1" fill="none"/><path d="M9 8.8 L14.5 14.5" stroke="#4a5058" stroke-width="1.7" stroke-linecap="round"/></svg><svg class="a" style="left:847px;top:286px" width="17" height="17" viewBox="0 0 17 17"><defs><linearGradient id="gar847_286" x1="0" y1="0" x2="1" y2="0"><stop offset="0" stop-color="#b8e838"/><stop offset="0.55" stop-color="#a0d818"/><stop offset="1" stop-color="#70b010"/></linearGradient><linearGradient id="gah847_286" x1="0" y1="0" x2="0" y2="1"><stop offset="0" stop-color="#b4e430"/><stop offset="1" stop-color="#80c010"/></linearGradient></defs><ellipse cx="8" cy="16.3" rx="3.5" ry="0.7" fill="rgba(40,80,20,0.2)"/><path d="M5.2 10 V3 Q5.2 1.2 7.5 1.2 H12 Q15.6 1.2 15.6 4 V7 Q14 5.6 12.5 6 Q10.8 6.5 10.8 10 Z" fill="url(#gar847_286)"/><path d="M10.8 4.5 Q11.5 2.3 13.5 2.5 Q15.5 3 15.6 6.5 Q14 5.3 12.5 5.7 Q11.2 6 10.8 7 Z" fill="#5e9818" opacity="0.75"/><path d="M0.4 9.6 H15.6 L8 16.4 Z" fill="url(#gah847_286)"/><path d="M6 3 V9.5" stroke="#d8f488" stroke-width="0.9" opacity="0.8"/></svg><div class="ta" style="left:682px;top:307px;width:203px;height:61px"></div>
<div class="vsb" style="left:868px;top:307px;width:17px;height:61px"></div>
<div class="a tup" style="left:873px;top:314px"></div>
<div class="a tdn" style="left:873px;top:357px"></div>
<div class="ph" style="left:682px;top:374px;width:203px;height:21px"></div>
<svg class="a" style="left:685px;top:377px" width="15" height="15" viewBox="0 0 15 15"><defs><linearGradient id="gs686_377" x1="0" y1="0" x2="0" y2="1"><stop offset="0" stop-color="#fffbd0"/><stop offset="0.45" stop-color="#f8e448"/><stop offset="1" stop-color="#e4b818"/></linearGradient></defs><ellipse cx="7.5" cy="13.3" rx="3.5" ry="1" fill="rgba(60,90,40,0.25)"/><path d="M7.5 0.8 L9.4 4.9 L13.9 5.4 L10.5 8.4 L11.5 12.8 L7.5 10.5 L3.5 12.8 L4.5 8.4 L1.1 5.4 L5.6 4.9 Z" fill="url(#gs686_377)" stroke="#c09a28" stroke-width="0.8" stroke-linejoin="round"/></svg>
<div class="t" style="left:704px;top:378px">Servicetext:</div>
<svg class="a" style="left:867px;top:376px" width="17" height="16" viewBox="0 0 17 16"><rect x="1.5" y="1.5" width="15" height="11.5" fill="#fff" stroke="#8898b0"/><path d="M10 1.5 H16" stroke="#c0cad8" stroke-width="1"/><rect x="11" y="1" width="1" height="1" fill="#fff"/><rect x="13" y="1" width="1" height="1" fill="#fff"/><circle cx="5.8" cy="5.6" r="4.3" fill="#e8f0fa" stroke="#7a8088" stroke-width="1.1"/><path d="M4 4 Q5 3 6.5 3.2" stroke="#fff" stroke-width="1" fill="none"/><path d="M9 8.8 L14.5 14.5" stroke="#4a5058" stroke-width="1.7" stroke-linecap="round"/></svg><svg class="a" style="left:847px;top:374px" width="17" height="17" viewBox="0 0 17 17"><defs><linearGradient id="gar847_374" x1="0" y1="0" x2="1" y2="0"><stop offset="0" stop-color="#b8e838"/><stop offset="0.55" stop-color="#a0d818"/><stop offset="1" stop-color="#70b010"/></linearGradient><linearGradient id="gah847_374" x1="0" y1="0" x2="0" y2="1"><stop offset="0" stop-color="#b4e430"/><stop offset="1" stop-color="#80c010"/></linearGradient></defs><ellipse cx="8" cy="16.3" rx="3.5" ry="0.7" fill="rgba(40,80,20,0.2)"/><path d="M5.2 10 V3 Q5.2 1.2 7.5 1.2 H12 Q15.6 1.2 15.6 4 V7 Q14 5.6 12.5 6 Q10.8 6.5 10.8 10 Z" fill="url(#gar847_374)"/><path d="M10.8 4.5 Q11.5 2.3 13.5 2.5 Q15.5 3 15.6 6.5 Q14 5.3 12.5 5.7 Q11.2 6 10.8 7 Z" fill="#5e9818" opacity="0.75"/><path d="M0.4 9.6 H15.6 L8 16.4 Z" fill="url(#gah847_374)"/><path d="M6 3 V9.5" stroke="#d8f488" stroke-width="0.9" opacity="0.8"/></svg><div class="ta" style="left:682px;top:395px;width:203px;height:46px"></div>
<div class="vsb" style="left:868px;top:395px;width:17px;height:46px"></div>
<div class="a tup" style="left:873px;top:402px"></div>
<div class="a tdn" style="left:873px;top:430px"></div>
<div class="ph" style="left:682px;top:447px;width:203px;height:21px"></div>
<svg class="a" style="left:685px;top:450px" width="15" height="15" viewBox="0 0 15 15"><defs><linearGradient id="gs686_450" x1="0" y1="0" x2="0" y2="1"><stop offset="0" stop-color="#fffbd0"/><stop offset="0.45" stop-color="#f8e448"/><stop offset="1" stop-color="#e4b818"/></linearGradient></defs><ellipse cx="7.5" cy="13.3" rx="3.5" ry="1" fill="rgba(60,90,40,0.25)"/><path d="M7.5 0.8 L9.4 4.9 L13.9 5.4 L10.5 8.4 L11.5 12.8 L7.5 10.5 L3.5 12.8 L4.5 8.4 L1.1 5.4 L5.6 4.9 Z" fill="url(#gs686_450)" stroke="#c09a28" stroke-width="0.8" stroke-linejoin="round"/></svg>
<div class="t" style="left:704px;top:451px">Küchentext:</div>
<svg class="a" style="left:867px;top:449px" width="17" height="16" viewBox="0 0 17 16"><rect x="1.5" y="1.5" width="15" height="11.5" fill="#fff" stroke="#8898b0"/><path d="M10 1.5 H16" stroke="#c0cad8" stroke-width="1"/><rect x="11" y="1" width="1" height="1" fill="#fff"/><rect x="13" y="1" width="1" height="1" fill="#fff"/><circle cx="5.8" cy="5.6" r="4.3" fill="#e8f0fa" stroke="#7a8088" stroke-width="1.1"/><path d="M4 4 Q5 3 6.5 3.2" stroke="#fff" stroke-width="1" fill="none"/><path d="M9 8.8 L14.5 14.5" stroke="#4a5058" stroke-width="1.7" stroke-linecap="round"/></svg><svg class="a" style="left:847px;top:447px" width="17" height="17" viewBox="0 0 17 17"><defs><linearGradient id="gar847_447" x1="0" y1="0" x2="1" y2="0"><stop offset="0" stop-color="#b8e838"/><stop offset="0.55" stop-color="#a0d818"/><stop offset="1" stop-color="#70b010"/></linearGradient><linearGradient id="gah847_447" x1="0" y1="0" x2="0" y2="1"><stop offset="0" stop-color="#b4e430"/><stop offset="1" stop-color="#80c010"/></linearGradient></defs><ellipse cx="8" cy="16.3" rx="3.5" ry="0.7" fill="rgba(40,80,20,0.2)"/><path d="M5.2 10 V3 Q5.2 1.2 7.5 1.2 H12 Q15.6 1.2 15.6 4 V7 Q14 5.6 12.5 6 Q10.8 6.5 10.8 10 Z" fill="url(#gar847_447)"/><path d="M10.8 4.5 Q11.5 2.3 13.5 2.5 Q15.5 3 15.6 6.5 Q14 5.3 12.5 5.7 Q11.2 6 10.8 7 Z" fill="#5e9818" opacity="0.75"/><path d="M0.4 9.6 H15.6 L8 16.4 Z" fill="url(#gah847_447)"/><path d="M6 3 V9.5" stroke="#d8f488" stroke-width="0.9" opacity="0.8"/></svg><div class="ta" style="left:682px;top:468px;width:203px;height:143px"></div>
<div class="vsb" style="left:868px;top:468px;width:17px;height:143px"></div>
<div class="a tup" style="left:873px;top:475px"></div>
<div class="a tdn" style="left:873px;top:600px"></div>
<div class="a" style="left:180px;top:463px;width:1px;height:155px;background:#e4e6f4"></div>
<div class="a" style="left:181px;top:463px;width:1px;height:155px;background:#fbfbff"></div>
<div class="a" style="left:661px;top:463px;width:1px;height:155px;background:#e4e6f4"></div>
<div class="a" style="left:662px;top:463px;width:1px;height:155px;background:#fbfbff"></div>
<div class="a" style="left:182px;top:618px;width:479px;height:1px;background:#e4e6f4"></div>
<div class="a" style="left:182px;top:619px;width:479px;height:1px;background:#fbfbff"></div>
<div class="a" style="left:181px;top:462px;width:1px;height:1px;background:#fbfbff"></div>
<div class="a" style="left:661px;top:462px;width:1px;height:1px;background:#fbfbff"></div>
<div class="a" style="left:181px;top:618px;width:1px;height:1px;background:#fbfbff"></div>
<div class="a" style="left:661px;top:618px;width:1px;height:1px;background:#fbfbff"></div>
<div class="a" style="left:182px;top:461px;width:4px;height:1px;background:#e4e6f4"></div>
<div class="a" style="left:182px;top:462px;width:4px;height:1px;background:#fbfbff"></div>
<div class="a" style="left:263px;top:461px;width:7px;height:1px;background:#e4e6f4"></div>
<div class="a" style="left:263px;top:462px;width:7px;height:1px;background:#fbfbff"></div>
<div class="a" style="left:338px;top:461px;width:323px;height:1px;background:#e4e6f4"></div>
<div class="a" style="left:338px;top:462px;width:323px;height:1px;background:#fbfbff"></div>
<div class="t" style="left:189px;top:456px">Preisgestaltung</div>
<div class="gc" style="left:270px;top:454px;width:68px;height:17px"></div>
<div class="t" style="left:274px;top:457px;font-size:12px;line-height:13px">VK</div>
<div class="tri" style="left:325px;top:461px"></div>
<div class="chk" style="left:188px;top:478px"></div>
<div class="t" style="left:204px;top:478px">Preis aus Komponenten</div>
<div class="t" style="left:329px;top:478px">0,00 €</div>
<div class="t" style="left:188px;top:503px">MwSt.:</div>
<div class="gc" style="left:270px;top:502px;width:68px;height:17px"></div>
<div class="t" style="left:273px;top:504px;font-size:12px;line-height:13px">1 : 19%</div>
<div class="tri" style="left:325px;top:508px"></div>
<div class="t" style="left:188px;top:526px">Preis-Artikel Nr:</div>
<div class="tb" style="left:269px;top:524px;width:123px;height:17px"></div>
<div class="t" style="left:382px;top:526px;transform:none">0</div>
<div class="a" style="left:423px;top:469px;width:30px;height:142px;background:rgba(255,255,255,0.3)"></div>
<div class="a" style="left:453px;top:469px;width:196px;height:142px;background:#fff"></div>
<div class="a" style="left:453px;top:469px;width:180px;height:17px;background:linear-gradient(#f4f4f4,#e8e8e8);border-bottom:1px solid #c8c8c8"></div>
<div class="a" style="left:512px;top:470px;width:1px;height:15px;background:#c8c8c8"></div>
<div class="a" style="left:572px;top:470px;width:1px;height:15px;background:#c8c8c8"></div>
<div class="t" style="left:455px;top:471px">Gültig ab</div>
<div class="t" style="left:515px;top:471px">Brutto</div>
<div class="t" style="left:575px;top:471px">Netto</div>
<div class="vsb" style="left:632px;top:469px;width:17px;height:125px"></div>
<div class="a tup" style="left:637px;top:476px"></div>
<div class="a tdn" style="left:637px;top:583px"></div>
<div class="a" style="left:453px;top:594px;width:196px;height:17px;background:#ececec"></div>
<div class="a" style="left:471px;top:595px;width:143px;height:15px;border:1px solid #9a9a9a;border-radius:2px;background:linear-gradient(#f4f4f4,#e0e0e0 50%,#d0d0d0 50%,#dcdcdc)"></div>
<div class="a" style="left:539px;top:599px;width:5px;height:6px;border-left:1px solid #555;border-right:1px solid #555"><div class="a" style="left:1px;top:0;width:1px;height:6px;background:#555"></div></div>
<div class="a" style="left:459px;top:599px;width:0;height:0;border-top:3.5px solid transparent;border-bottom:3.5px solid transparent;border-right:4px solid #404040"></div>
<div class="a" style="left:623px;top:599px;width:0;height:0;border-top:3.5px solid transparent;border-bottom:3.5px solid transparent;border-left:4px solid #404040"></div>
<svg class="a" style="left:430px;top:476px" width="16" height="17" viewBox="0 0 16 17"><path d="M0.5 0.5 H8 L12 4.5 V15.5 H0.5 Z" fill="#fdfdfd" stroke="#90a098"/><path d="M8 0.5 V4.5 H12" fill="#e8e8e8" stroke="#90a098"/><path d="M9 10 H11 V8 H13 V10 H15 V12 H13 V14 H11 V12 H9 Z" fill="#30b030" stroke="#208020" stroke-width="0.5"/></svg>
<svg class="a" style="left:430px;top:498px" width="16" height="17" viewBox="0 0 16 17"><ellipse cx="8" cy="3" rx="6.5" ry="2.2" fill="#b8b8b8" stroke="#888"/><path d="M1.5 3.5 L3 15 Q8 17 13 15 L14.5 3.5 Q8 6 1.5 3.5 Z" fill="#a8a8a8" stroke="#808080" stroke-width="0.8"/><path d="M5 7 L5.5 14 M8 7.5 V15 M11 7 L10.5 14" stroke="#e0e0e0" stroke-width="1"/></svg>
<div class="a" style="left:891px;top:613px;width:17px;height:17px;background:#f0f0f0"></div>
<div class="a" style="left:903px;top:620px;width:1px;height:1px;background:#fff"></div><div class="a" style="left:904px;top:621px;width:1px;height:2px;background:#8a8a8a"></div>
<div class="a" style="left:900px;top:623px;width:1px;height:1px;background:#fff"></div><div class="a" style="left:901px;top:624px;width:1px;height:2px;background:#8a8a8a"></div>
<div class="a" style="left:903px;top:623px;width:1px;height:1px;background:#fff"></div><div class="a" style="left:904px;top:624px;width:1px;height:2px;background:#8a8a8a"></div>
<div class="a" style="left:897px;top:626px;width:1px;height:1px;background:#fff"></div><div class="a" style="left:898px;top:627px;width:1px;height:2px;background:#8a8a8a"></div>
<div class="a" style="left:900px;top:626px;width:1px;height:1px;background:#fff"></div><div class="a" style="left:901px;top:627px;width:1px;height:2px;background:#8a8a8a"></div>
<div class="a" style="left:903px;top:626px;width:1px;height:1px;background:#fff"></div><div class="a" style="left:904px;top:627px;width:1px;height:2px;background:#8a8a8a"></div>
</body></html>
